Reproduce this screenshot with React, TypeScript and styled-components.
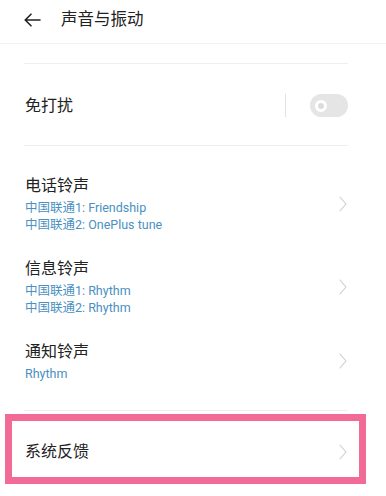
import React from "react";
import styled, { createGlobalStyle } from "styled-components";

const Global = createGlobalStyle`
  html, body { margin: 0; padding: 0; background: #ffffff; }
  body { font-family: Roboto, "Noto Sans CJK SC", sans-serif; -webkit-font-smoothing: antialiased; }
  * { box-sizing: border-box; }
`;

const Page = styled.div`
  width: 386px;
  height: 496px;
  overflow: hidden;
  background: #fff;
  display: flex;
  flex-direction: column;
`;

const Header = styled.header`
  height: 44px;
  display: flex;
  align-items: center;
  gap: 20px;
  padding: 0 0 4px 24px;
  border-bottom: 1px solid #f3f3f3;
`;

const Title = styled.h1`
  margin: 0;
  font-size: 16.5px;
  font-weight: 400;
  color: #222;
  line-height: 24px;
`;

const Divider = styled.div<{ $top?: number }>`
  height: 1px;
  background: #eeeeee;
  margin: ${(p) => p.$top ?? 0}px 38px 0 24px;
`;

const SwitchRow = styled.div`
  height: 81px;
  display: flex;
  align-items: center;
  padding: 2px 38px 0 25px;
`;

const Label = styled.div`
  font-size: 16px;
  color: #222;
  line-height: 24px;
  flex: 1;
`;

const VBar = styled.div`
  width: 1px;
  height: 23px;
  background: #e2e2e2;
  margin-right: 24px;
`;

const Toggle = styled.div`
  width: 38px;
  height: 23px;
  border-radius: 12px;
  background: #e5e5e5;
  display: flex;
  align-items: center;
  padding-left: 5px;
`;

const Knob = styled.div`
  width: 12px;
  height: 12px;
  border-radius: 50%;
  border: 3px solid #ffffff;
  background: #dcdcdc;
`;

const Group = styled.div`
  padding: 16px 0 15px;
  display: flex;
  flex-direction: column;
`;

const Row = styled.div`
  display: flex;
  align-items: center;
  padding: 12px 39px 12px 25px;
`;

const Texts = styled.div`
  flex: 1;
  display: flex;
  flex-direction: column;
`;

const Subs = styled.div`
  margin-top: 2px;
  display: flex;
  flex-direction: column;
`;

const Sub = styled.div`
  font-size: 12.5px;
  color: #4a90c2;
  line-height: 16.5px;
`;

const Highlight = styled.div`
  margin: 3px 20px 0 5px;
  border: 7px solid #f26a96;
  height: 70px;
  display: flex;
  align-items: center;
  padding: 7px 12px 0 13px;
`;

const Chevron = () => (
  <svg width="8" height="16" viewBox="0 0 8 16">
    <path d="M1 1 L7 8 L1 15" fill="none" stroke="#cccccc" strokeWidth="1.1" strokeLinecap="round" strokeLinejoin="round" />
  </svg>
);

const BackArrow = () => (
  <svg width="17" height="14" viewBox="0 0 17 14">
    <path d="M16 7 H1.5 M7 1.2 L1.2 7 L7 12.8" fill="none" stroke="#222" strokeWidth="1.6" strokeLinecap="round" strokeLinejoin="round" />
  </svg>
);

const items = [
  { title: "电话铃声", subs: ["中国联通1: Friendship", "中国联通2: OnePlus tune"] },
  { title: "信息铃声", subs: ["中国联通1: Rhythm", "中国联通2: Rhythm"] },
  { title: "通知铃声", subs: ["Rhythm"] },
];

export default function App() {
  return (
    <>
      <Global />
      <Page>
        <Header>
          <BackArrow />
          <Title>声音与振动</Title>
        </Header>
        <Divider $top={19} />
        <SwitchRow>
          <Label>免打扰</Label>
          <VBar />
          <Toggle>
            <Knob />
          </Toggle>
        </SwitchRow>
        <Divider />
        <Group>
          {items.map((it) => (
            <Row key={it.title}>
              <Texts>
                <Label>{it.title}</Label>
                <Subs>
                  {it.subs.map((s) => (
                    <Sub key={s}>{s}</Sub>
                  ))}
                </Subs>
              </Texts>
              <Chevron />
            </Row>
          ))}
        </Group>
        <Divider />
        <Highlight>
          <Label>系统反馈</Label>
          <Chevron />
        </Highlight>
      </Page>
    </>
  );
}
